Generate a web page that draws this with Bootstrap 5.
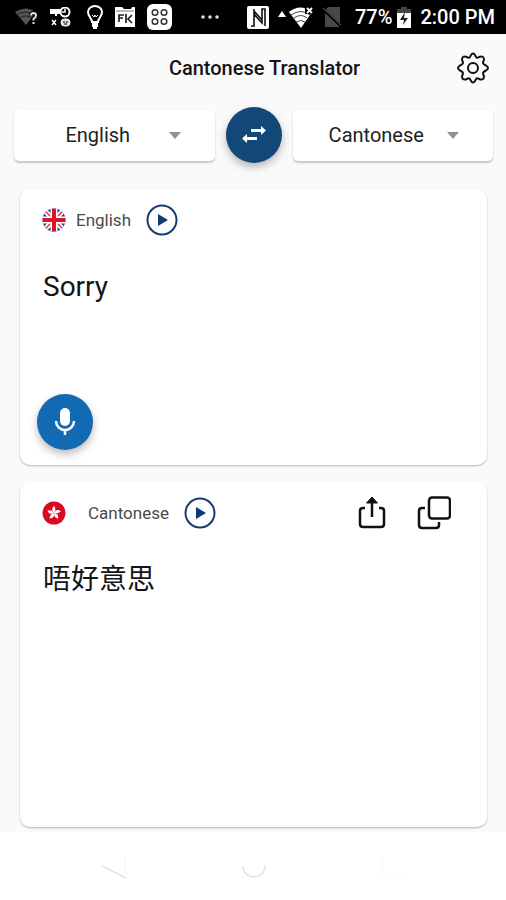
<!DOCTYPE html>
<html lang="en">
<head>
<meta charset="utf-8">
<meta name="viewport" content="width=device-width, initial-scale=1">
<title>Cantonese Translator</title>
<link href="https://cdn.jsdelivr.net/npm/bootstrap@5.3.0/dist/css/bootstrap.min.css" rel="stylesheet">
<style>
body{font-family:Roboto,"Noto Sans CJK TC",sans-serif;background:#fafafa;color:#151515}
svg{display:block;flex:none}
.status-bar{background:#000;color:#fff;height:34px;padding:0 11px 0 15px;font-size:20px;font-weight:500}
.status-left{gap:12px}
.status-right{gap:5px}
.top-bar{display:grid;grid-template-columns:57px 1fr 34px;padding:0 16px;height:68px}
.top-bar h1{font-size:20px;line-height:24px;font-weight:500}
.icon-btn{border:0;background:none;padding:0;color:#111}
.pickers{padding:5px 13px 0 14px;gap:11px}
.lang-select{flex:1 1 0;height:51px;min-width:0;border:0;border-radius:5px;font-size:20px;color:#222;padding:0 33px 0 0;text-align:center;text-align-last:center;background-color:#fff;
--bs-form-select-bg-img:url("data:image/svg+xml,%3Csvg xmlns='http://www.w3.org/2000/svg' viewBox='0 0 12 7'%3E%3Cpath fill='%23929292' d='M0 0h12L6 7z'/%3E%3C/svg%3E");
background-position:right 34px center;background-size:12px 7px;box-shadow:0 2px 2px rgba(0,0,0,.2),0 0 2px rgba(0,0,0,.05)}
.round-btn{width:56px;height:56px;border-radius:50%;border:0;padding:0;color:#fff;flex:none;box-shadow:0 4px 8px rgba(0,0,0,.28)}
.swap-btn{background:#124877}
.mic-btn{background:#126ab3}
.panels{padding:26px 19px 5px 20px;gap:17px}
.panel{background:#fff;border-radius:10px;box-shadow:0 1px 2px rgba(0,0,0,.28)}
.panel-source{height:276px;padding:14px 17px 15px}
.panel-target{height:345px;padding:14px 17px}
.panel-head{height:34px;padding-left:5px;padding-right:19px}
.lang-name{font-size:17px;line-height:24px;color:#4a4a4a;margin:0 15px 0 10px}
.panel-target .lang-name{margin-left:22px}
.share-btn{margin-right:27px}
.phrase{font-size:28px;line-height:36px;padding:0 6px;margin-top:32px}
.nav-strip{background:#fff;height:68px;color:#e2e2e2;padding:0 100px 0 102px}
</style>
</head>
<body>
<header>
  <div class="status-bar d-flex align-items-center justify-content-between">
    <div class="status-left d-flex align-items-center">
      <svg width="23" height="20" viewBox="0 0 23 20"><path fill="#555" d="M0 5Q10.500-2 21 5L11 18z"/><path d="M1 8q9-6 18 0M4 11q7-4 13 0" fill="none" stroke="#222"/><path d="M16 8.500q0-2.500 2.500-2.500t2.500 2.500q0 1.500-2.500 3.500v1.500M18.500 15v2.500" fill="none" stroke="#000" stroke-width="4"/><path d="M16 8.500q0-2.500 2.500-2.500t2.500 2.500q0 1.500-2.500 3.500v1.500M18.500 15v2" fill="none" stroke="#ddd" stroke-width="2"/></svg>
      <svg width="21" height="20" viewBox="0 0 21 20" fill="none" stroke="#fff"><path d="M0 2h11v5H7v2H5V7H0z" fill="#fff" stroke="none"/><circle cx="15" cy="5" r="4.500" stroke-width="2"/><path d="M15 2v3h-3M2 13l4 5M6 13l-4 5" stroke-width="1.500"/><rect x="11" y="12" width="9" height="7" rx="3.500" fill="#ddd"/><path d="M13 15h2M16 15h2M14 17h3" stroke="#000"/></svg>
      <svg class="ms-1" width="16" height="24" viewBox="0 0 16 24" fill="none" stroke="#fff" stroke-width="2"><path d="M5 17c0-4-4-5-4-10a7 6 0 0 1 14 0c0 5-4 6-4 10z"/><path d="M5 10l2 2 1-2 1 2 2-2" stroke-width="1"/><path d="M5 18h6v4H5z" fill="#fff" stroke="none"/><path d="M6 23h4"/></svg>
      <svg width="20" height="20" viewBox="0 0 20 20"><path fill="#fff" d="M0 0h7l2 2h7l1-2h3v20H0z"/><path d="M1 4h18" stroke="#777"/><path d="M4 15V8h5M4 11h4M11 7v9M17 8l-4 4 4 4" fill="none" stroke="#222" stroke-width="1.700"/></svg>
      <svg width="25" height="26" viewBox="0 0 25 26"><rect width="25" height="26" rx="6" fill="#fff"/><g fill="none" stroke="#333" stroke-width="1.500"><circle cx="8" cy="8.500" r="2.800"/><circle cx="17" cy="8.500" r="2.800"/><circle cx="8" cy="17.500" r="2.800"/><circle cx="17" cy="17.500" r="2.800"/></g></svg>
      <svg class="ms-3" width="20" height="6" viewBox="0 0 20 6" fill="#ddd"><circle cx="3" cy="3" r="1.800"/><circle cx="10" cy="3" r="1.800"/><circle cx="17" cy="3" r="1.800"/></svg>
    </div>
    <div class="status-right d-flex align-items-center">
      <svg width="22" height="23" viewBox="0 0 22 23"><rect width="22" height="23" rx="2" fill="#fff"/><path d="M4 20h3V8l8 9V9M7 5l8 9M15 12V3h3v17M7 8V3" fill="none" stroke="#111" stroke-width="1.600"/></svg>
      <svg class="ms-1" width="36" height="22" viewBox="0 0 36 22"><path d="M0 11l4-6 4 6z" fill="#fff"/><path d="M11 6q11-9 23 0L23 22z" fill="#fff"/><path d="M13 9q10-7 19 0M16 12q7-5 13 0M18 16q5-3 9 0" fill="none" stroke="#444" stroke-width="1"/><path d="M27 0h9v8h-9z"/><path d="M29 2l5 5M34 2l-5 5" stroke="#fff" stroke-width="1.800"/></svg>
      <svg class="mx-1" width="19" height="20" viewBox="0 0 19 20"><path d="M5 0h12v20H2V3z" fill="#484848"/><path d="M0 2l18 17" stroke="#000" stroke-width="3"/><path d="M0 1l18 17" stroke="#666"/></svg>
      <span class="ms-1">77%</span>
      <svg width="14" height="21" viewBox="0 0 14 21"><path d="M4 0h6v2h4v4H0V2h4z" fill="#444"/><path d="M0 6h14v15H0z" fill="#fff"/><path d="M8 5l-5 8h4l-1 5 5-7H7z" fill="#222"/></svg>
      <span class="ms-1">2:00 PM</span>
    </div>
  </div>
  <div class="top-bar align-items-center">
    <span></span>
    <h1 class="m-0 text-center">Cantonese Translator</h1>
    <button class="icon-btn" type="button" aria-label="Settings">
      <svg width="34" height="34" viewBox="0 0 34 34" fill="none" stroke="currentColor" stroke-width="2"><circle cx="17" cy="17" r="5"/><path stroke-linejoin="round" d="M15 4Q17 1 19 4C20 7 21 7.500 23 6Q28 4 28 9C26 12 27 13 30 14.500Q34 17 30 19.500C27 21 26 22 28 25Q28 30 23 28C21 26.500 20 27 19 30Q17 33 15 30C14 27 13 26.500 11 28Q6 30 6 25C8 22 7 21 4 19.500Q0 17 4 14.500C7 13 8 12 6 9Q6 4 11 6C13 7.500 14 7 15 4z"/></svg>
    </button>
  </div>
</header>
<main>
  <div class="pickers d-flex align-items-center">
    <select class="form-select lang-select" aria-label="Source language"><option>English</option></select>
    <button class="round-btn swap-btn d-flex align-items-center justify-content-center" type="button" aria-label="Swap languages">
      <svg width="26" height="20" viewBox="0 0 26 20" fill="currentColor"><path d="M10 4h10V1l5 4.500-5 4.500V7H10zM16 12H6V9l-5 4.500L6 18v-3h10z"/></svg>
    </button>
    <select class="form-select lang-select" aria-label="Target language"><option>Cantonese</option></select>
  </div>
  <div class="panels d-flex flex-column">
    <section class="panel panel-source d-flex flex-column align-items-start">
      <div class="panel-head d-flex align-items-center w-100">
        <svg width="24" height="24" viewBox="0 0 24 24"><defs><clipPath id="disc"><circle cx="12" cy="12" r="11.500"/></clipPath></defs><g clip-path="url(#disc)"><path fill="#233b9b" d="M0 0h24v24H0z"/><path d="M0 0l24 24M24 0L0 24" stroke="#fff" stroke-width="5"/><path d="M0 0l24 24M24 0L0 24" stroke="#e33545" stroke-width="1.500"/><path d="M12 0v24M0 12h24" stroke="#fff" stroke-width="7"/><path d="M12 0v24M0 12h24" stroke="#dc1525" stroke-width="4"/></g></svg>
        <span class="lang-name">English</span>
        <button class="icon-btn" type="button" aria-label="Play English"><svg width="32" height="32" viewBox="0 0 32 32"><circle cx="16" cy="16" r="14.500" fill="none" stroke="#173b72" stroke-width="2"/><path fill="#0d3b73" d="M12 10v12l10-6z"/></svg></button>
      </div>
      <div class="phrase">Sorry</div>
      <button class="round-btn mic-btn d-flex align-items-center justify-content-center mt-auto" type="button" aria-label="Speak">
        <svg width="22" height="28" viewBox="0 0 22 28"><rect x="6" y="0" width="10" height="18" rx="5" fill="#fff"/><path d="M2 13a9 9 0 0 0 18 0M11 22v5" fill="none" stroke="#fff" stroke-width="2.500"/></svg>
      </button>
    </section>
    <section class="panel panel-target">
      <div class="panel-head d-flex align-items-center">
        <svg width="24" height="24" viewBox="0 0 24 24"><circle cx="12" cy="12" r="11.500" fill="#da0a20"/><g fill="#fff"><g id="petal"><path d="M12 12C9 9 10 6 13 5c-1 2 1.500 3 0 5z"/></g><use href="#petal" transform="rotate(72 12 12)"/><use href="#petal" transform="rotate(144 12 12)"/><use href="#petal" transform="rotate(216 12 12)"/><use href="#petal" transform="rotate(288 12 12)"/></g></svg>
        <span class="lang-name">Cantonese</span>
        <button class="icon-btn" type="button" aria-label="Play Cantonese"><svg width="32" height="32" viewBox="0 0 32 32"><circle cx="16" cy="16" r="14.500" fill="none" stroke="#173b72" stroke-width="2"/><path fill="#0d3b73" d="M12 10v12l10-6z"/></svg></button>
        <button class="icon-btn share-btn ms-auto" type="button" aria-label="Share"><svg width="36" height="34" viewBox="0 0 36 34" fill="none" stroke="currentColor" stroke-width="2.500"><path d="M11 12H9q-3 0-3 3v13q0 3 3 3h18q3 0 3-3V15q0-3-3-3h-2M18 5v16"/><path d="M12.500 7L18 1l5.500 6z" fill="currentColor" stroke-width="1"/></svg></button>
        <button class="icon-btn" type="button" aria-label="Copy"><svg width="34" height="34" viewBox="0 0 34 34" fill="none" stroke="currentColor" stroke-width="2.500"><rect x="12" y="1.500" width="21" height="21" rx="3"/><path d="M8 12H5q-3 0-3 3v14q0 3 3 3h14q3 0 3-3v-3"/></svg></button>
      </div>
      <div class="phrase" lang="zh-HK">唔好意思</div>
    </section>
  </div>
</main>
<footer class="nav-strip d-flex align-items-center justify-content-between">
  <svg width="26" height="26" viewBox="0 0 26 26" fill="none" stroke="currentColor"><path d="M0 13l24 12" stroke-width="1.500"/><path d="M23 25V2" stroke="#f5f5f5"/></svg>
  <svg width="26" height="26" viewBox="0 0 26 26" fill="none" stroke="currentColor" stroke-width="1.500"><path d="M2 13a11 11 0 0 0 22 0"/></svg>
  <svg width="26" height="26" viewBox="0 0 26 26" fill="none" stroke="#f8f8f8"><path d="M2 2v22h6M16 24h8"/></svg>
</footer>
<script src="https://cdn.jsdelivr.net/npm/bootstrap@5.3.0/dist/js/bootstrap.bundle.min.js"></script>
</body>
</html>
